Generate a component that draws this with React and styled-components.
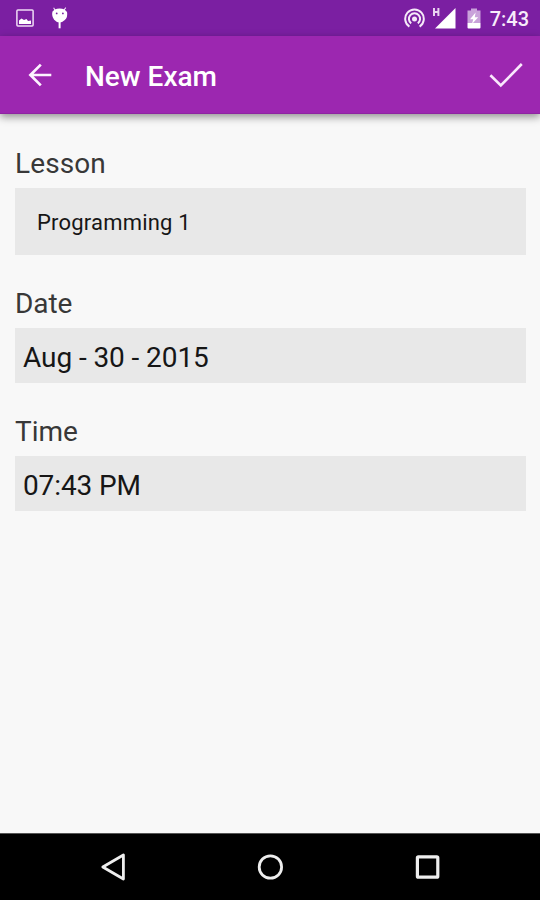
import React from 'react'
import styled, { createGlobalStyle } from 'styled-components'

const fields = [
  { id: 1, label: 'Lesson', value: 'Programming 1', type: 'select', track: '0.1px', valueTrack: '0.2px' },
  { id: 2, label: 'Date', value: 'Aug - 30 - 2015', type: 'text', track: '-0.1px', valueTrack: '-0.08px' },
  { id: 3, label: 'Time', value: '07:43 PM', type: 'text', track: '0px', valueTrack: '-0.12px' },
]

const imageIcon = (
  <svg width='18' height='18' viewBox='0 0 18 18'>
    <rect x='0.9' y='0.9' width='16.2' height='16.2' rx='1' fill='none' stroke='#efdcf5' strokeWidth='1.5' />
    <path d='M3 15V11.5L5.5 9.5L8 11L10.5 10L12 12L15 11.5V15Z' fill='#fff' />
  </svg>
)

const bugIcon = (
  <svg width='18' height='22' viewBox='0 0 18 22'>
    <path d='M4 3L2.6 0.7M13 3L14.8 0.7' stroke='#f3e5f7' strokeWidth='1.1' />
    <path d='M3.6 2.6Q8.7 0.6 13.6 2.6L16 5Q17 10 13.8 13Q11 15.6 8.5 15.6Q5.4 15.4 3.2 12.8Q0.4 9 1.4 4.8Z' fill='#fff' />
    <path d='M8.6 14V21.3' stroke='#fff' strokeWidth='2' />
    <circle cx='5.7' cy='6.4' r='0.9' fill='#7b1fa2' />
    <circle cx='11.9' cy='6.4' r='0.9' fill='#7b1fa2' />
  </svg>
)

const hotspotIcon = (
  <svg width='21' height='20' viewBox='0 0 21 20' fill='none' stroke='#f5e9f8' strokeWidth='2'>
    <path d='M5.4 18.6A9.3 9.3 0 1 1 15.6 18.6' />
    <path d='M7.2 15.4A5.6 5.6 0 1 1 13.8 15.4' />
    <circle cx='10.5' cy='11' r='2.5' fill='#f5e9f8' stroke='none' />
  </svg>
)

const signalIcon = (
  <svg width='24' height='22' viewBox='0 0 24 22'>
    <path d='M1 1V9M5.4 1V9M1 5H5.4' stroke='#e9d3f0' strokeWidth='2' />
    <path d='M22.5 1V21.5H2Z' fill='#fff' />
  </svg>
)

const batteryIcon = (
  <svg width='14' height='21' viewBox='0 0 14 21'>
    <path d='M4 0.5H10V2.5H13.5V15H0.5V2.5H4Z' fill='#c9a2da' />
    <path d='M0.5 15H13.5V19.5Q13.5 20.5 12.5 20.5H1.5Q0.5 20.5 0.5 19.5Z' fill='#fff' />
    <path d='M8.6 4.5L3 11.2H6.2L5 16L11.2 9.3H7.8Z' fill='#fff' />
  </svg>
)

const backIcon = (
  <svg width='24' height='24' viewBox='0 0 24 24' fill='none' stroke='#fdf3ff' strokeWidth='2.7'>
    <path d='M23.3 12H2.6M12.8 1.6L2.4 12L12.8 22.4' />
  </svg>
)

const checkIcon = (
  <svg width='34' height='26' viewBox='0 0 34 26' fill='none' stroke='#f9e8fc' strokeWidth='2.6'>
    <path d='M1.4 13.2L11.8 23.4L32.8 2' />
  </svg>
)

const navBackIcon = (
  <svg width='26' height='30' viewBox='0 0 26 30'>
    <path d='M23.4 3V27L2.8 15Z' fill='none' stroke='#eee' strokeWidth='2.8' strokeLinejoin='round' />
  </svg>
)

const navHomeIcon = (
  <svg width='26' height='26' viewBox='0 0 26 26'>
    <circle cx='13.4' cy='13' r='11.2' fill='none' stroke='#eee' strokeWidth='2.8' />
  </svg>
)

const navRecentIcon = (
  <svg width='26' height='26' viewBox='0 0 26 26'>
    <rect x='3.4' y='2.8' width='20.4' height='20.4' rx='1' fill='none' stroke='#eee' strokeWidth='3.2' />
  </svg>
)

function App() {
  return (
    <>
      <GlobalStyle />
      <ScreenStyled>
        <StatusBar>
          <div className='notifications'>
            {imageIcon}
            {bugIcon}
          </div>
          <div className='system'>
            {hotspotIcon}
            {signalIcon}
            {batteryIcon}
            <span>7:43</span>
          </div>
        </StatusBar>
        <AppBar>
          <IconButton aria-label='Back'>{backIcon}</IconButton>
          <h1>New Exam</h1>
          <IconButton aria-label='Save'>{checkIcon}</IconButton>
        </AppBar>
        <FormStyled>
          {fields.map((field) => {
            return <FieldStyled key={field.id}>
              <Label $track={field.track}>{field.label}</Label>
              <Value $type={field.type} $track={field.valueTrack}>{field.value}</Value>
            </FieldStyled>
          })}
        </FormStyled>
        <NavBar>
          <IconButton aria-label='Navigate back'>{navBackIcon}</IconButton>
          <IconButton aria-label='Home'>{navHomeIcon}</IconButton>
          <IconButton aria-label='Recent apps'>{navRecentIcon}</IconButton>
        </NavBar>
      </ScreenStyled>
    </>
  )
}

const GlobalStyle = createGlobalStyle`
  *{
    box-sizing: border-box;
    margin: 0;
    padding: 0;
  }
  body{
    font-family: Roboto, sans-serif;
    background: #f8f8f8;
  }
`;

const ScreenStyled = styled.div`
  width: 540px;
  height: 900px;
  display: flex;
  flex-direction: column;
  overflow: hidden;
  background: #f8f8f8;
`;

const StatusBar = styled.header`
  height: 36px;
  flex-shrink: 0;
  display: flex;
  align-items: center;
  justify-content: space-between;
  padding: 0 11px 0 16px;
  background: #7b1fa2;
  color: #f7ecfa;
  .notifications, .system{
    display: flex;
    align-items: center;
  }
  .notifications{
    gap: 17px;
  }
  .system{
    gap: 9px;
  }
  .system svg:nth-child(2){
    margin-left: -1px;
    margin-right: 1px;
  }
  span{
    font-size: 20px;
    font-weight: 500;
    line-height: 36px;
    padding-top: 2px;
  }
`;

const AppBar = styled.div`
  height: 78px;
  flex-shrink: 0;
  display: flex;
  align-items: center;
  padding: 0 17px 0 28px;
  background: #9c27b0;
  border-bottom: 1px solid #8e24a2;
  box-shadow: 0 3px 8px rgba(0, 0, 0, .42);
  z-index: 1;
  h1{
    flex: 1;
    margin-left: 33px;
    padding-top: 4px;
    font-size: 28px;
    font-weight: 500;
    line-height: 36px;
    color: #fff;
  }
`;

const IconButton = styled.button`
  display: flex;
  align-items: center;
  justify-content: center;
  border: none;
  background: transparent;
  cursor: pointer;
`;

const FormStyled = styled.main`
  flex: 1;
  display: flex;
  flex-direction: column;
  gap: 32px;
  padding: 33px 14px 0 15px;
`;

const FieldStyled = styled.div`
  display: flex;
  flex-direction: column;
  gap: 7px;
`;

const Label = styled.label`
  font-size: 28px;
  line-height: 34px;
  letter-spacing: ${(props) => props.$track};
  color: #383838;
`;

const Value = styled.div`
  display: flex;
  align-items: center;
  height: ${(props) => props.$type === 'select' ? '67px' : '55px'};
  padding: ${(props) => props.$type === 'select' ? '2px 22px 0' : '3px 8px 0'};
  font-size: ${(props) => props.$type === 'select' ? '22px' : '28px'};
  letter-spacing: ${(props) => props.$track};
  color: #161616;
  background: #e8e8e8;
`;

const NavBar = styled.nav`
  height: 67px;
  flex-shrink: 0;
  display: flex;
  align-items: center;
  justify-content: center;
  gap: 131px;
  background: #000;
  border-top: 1px solid #555;
`;

export default App
